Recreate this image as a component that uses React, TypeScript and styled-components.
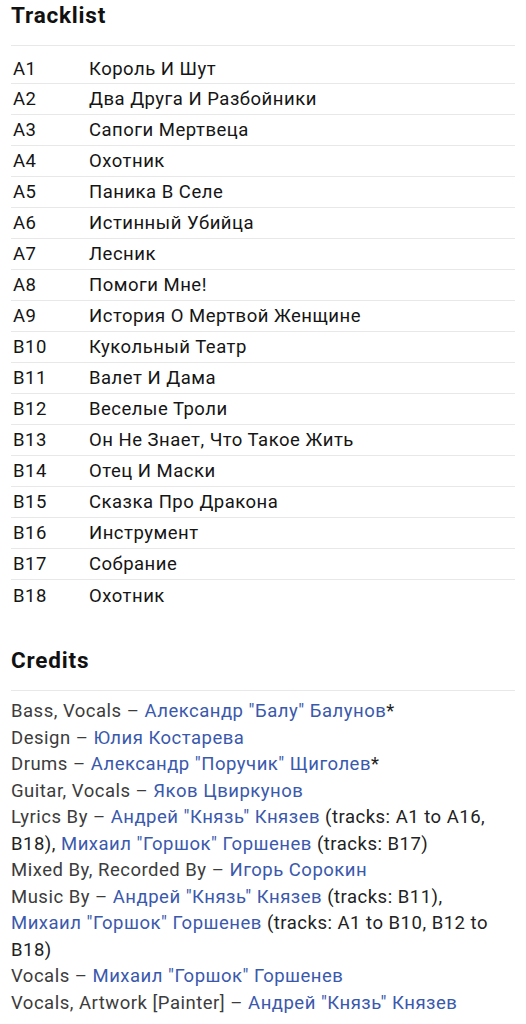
import React from 'react';
import styled, { createGlobalStyle } from 'styled-components';

const GlobalStyle = createGlobalStyle`
  body {
    margin: 0;
    background: #fff;
    font-family: Roboto, "Noto Sans", sans-serif;
  }
`;

const Page = styled.div`
  padding: 0 11px;
  width: 526px;
  box-sizing: border-box;
`;

const Heading = styled.h2`
  margin: 0;
  font-size: 22.5px;
  font-weight: 700;
  letter-spacing: 0.8px;
  color: #111;
  line-height: 30px;
`;

const Section = styled.section<{ $top: number }>`
  padding-top: ${p => p.$top}px;
`;

const Table = styled.div`
  margin-top: 15px;
  border-top: 1px solid #e8e8e8;
`;

const Row = styled.div<{ $first?: boolean }>`
  display: flex;
  align-items: center;
  box-sizing: border-box;
  height: ${p => (p.$first ? 38 : 31)}px;
  padding-top: ${p => (p.$first ? 8 : 0)}px;
  border-bottom: 1px solid #e8e8e8;
  font-size: 18.5px;
  letter-spacing: 0.5px;
  color: #151515;
  &:last-child {
    border-bottom: none;
  }
`;

const Position = styled.span`
  width: 76px;
  padding-left: 2px;
  flex-shrink: 0;
`;

const Title = styled.span``;

const CreditList = styled.div`
  margin-top: 15px;
  border-top: 1px solid #e8e8e8;
  padding-top: 7px;
`;

const Credit = styled.div`
  font-size: 18.5px;
  letter-spacing: 0.5px;
  line-height: 26.5px;
  color: #222;
`;

const Role = styled.span`
  color: #3c3c3c;
`;

const Artist = styled.a`
  color: #3a59ad;
  text-decoration: none;
`;

const tracks: [string, string][] = [
  ['A1', 'Король И Шут'],
  ['A2', 'Два Друга И Разбойники'],
  ['A3', 'Сапоги Мертвеца'],
  ['A4', 'Охотник'],
  ['A5', 'Паника В Селе'],
  ['A6', 'Истинный Убийца'],
  ['A7', 'Лесник'],
  ['A8', 'Помоги Мне!'],
  ['A9', 'История О Мертвой Женщине'],
  ['B10', 'Кукольный Театр'],
  ['B11', 'Валет И Дама'],
  ['B12', 'Веселые Троли'],
  ['B13', 'Он Не Знает, Что Такое Жить'],
  ['B14', 'Отец И Маски'],
  ['B15', 'Сказка Про Дракона'],
  ['B16', 'Инструмент'],
  ['B17', 'Собрание'],
  ['B18', 'Охотник'],
];

const KNYAZ = 'Андрей "Князь" Князев';
const GORSHOK = 'Михаил "Горшок" Горшенев';

const App: React.FC = () => {
  return (
    <Page>
      <GlobalStyle />
      <Section $top={0}>
        <Heading>Tracklist</Heading>
        <Table>
          {tracks.map(([pos, title], i) => (
            <Row key={pos} $first={i === 0}>
              <Position>{pos}</Position>
              <Title>{title}</Title>
            </Row>
          ))}
        </Table>
      </Section>
      <Section $top={34}>
        <Heading>Credits</Heading>
        <CreditList>
          <Credit><Role>Bass, Vocals – </Role><Artist>Александр "Балу" Балунов</Artist>*</Credit>
          <Credit><Role>Design – </Role><Artist>Юлия Костарева</Artist></Credit>
          <Credit><Role>Drums – </Role><Artist>Александр "Поручик" Щиголев</Artist>*</Credit>
          <Credit><Role>Guitar, Vocals – </Role><Artist>Яков Цвиркунов</Artist></Credit>
          <Credit>
            <Role>Lyrics By – </Role><Artist>{KNYAZ}</Artist> (tracks: A1 to A16, B18), <Artist>{GORSHOK}</Artist> (tracks: B17)
          </Credit>
          <Credit><Role>Mixed By, Recorded By – </Role><Artist>Игорь Сорокин</Artist></Credit>
          <Credit>
            <Role>Music By – </Role><Artist>{KNYAZ}</Artist> (tracks: B11), <Artist>{GORSHOK}</Artist> (tracks: A1 to B10, B12 to B18)
          </Credit>
          <Credit><Role>Vocals – </Role><Artist>{GORSHOK}</Artist></Credit>
          <Credit><Role>Vocals, Artwork [Painter] – </Role><Artist>{KNYAZ}</Artist></Credit>
        </CreditList>
      </Section>
    </Page>
  );
};

export default App;
